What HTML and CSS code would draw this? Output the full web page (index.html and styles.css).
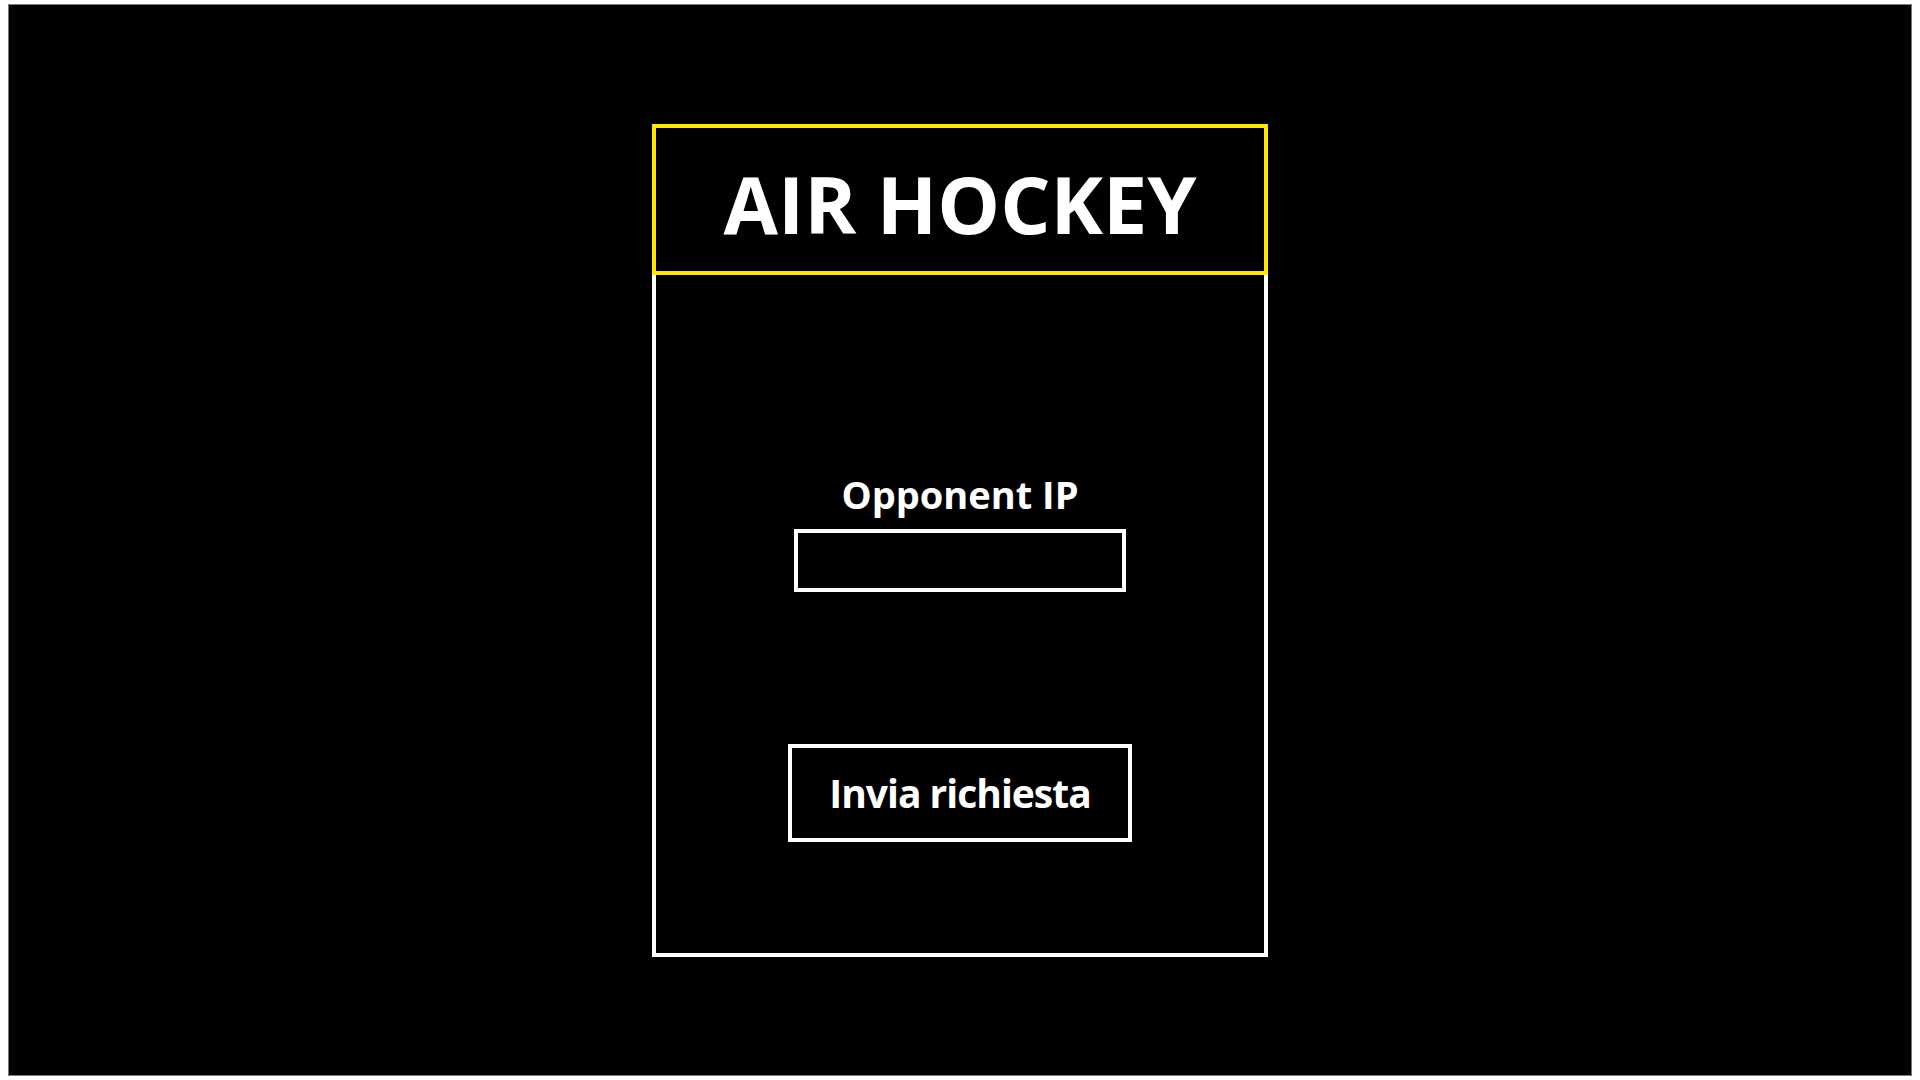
FILE: index.html
```html
<!DOCTYPE html>
<html lang="it">
<head>
<meta charset="utf-8">
<title>Air Hockey</title>
<link rel="stylesheet" href="styles.css">
</head>
<body>
<div class="screen">
  <div class="card">
    <header class="card-header">
      <h1 class="title">AIR HOCKEY</h1>
    </header>
    <main class="card-body">
      <label class="label" for="ip">Opponent IP</label>
      <input class="ip-input" id="ip" type="text">
      <button class="send-btn" type="button">Invia richiesta</button>
    </main>
  </div>
</div>
</body>
</html>
```
FILE: styles.css
```css
html, body {
  margin: 0;
  padding: 0;
  background: #ffffff;
}
body {
  padding: 4px 8px;
  font-family: "Open Sans", "Noto Sans", sans-serif;
}
.screen {
  box-sizing: border-box;
  height: 1072px;
  background: #000000;
  border: 1px solid #7a7a7a;
  display: flex;
  justify-content: center;
  padding-top: 119px;
}
.card {
  width: 616px;
  display: flex;
  flex-direction: column;
}
.card-header {
  box-sizing: border-box;
  height: 151px;
  border: 4px solid #ffe500;
  display: flex;
  justify-content: center;
}
.title {
  margin: 0;
  color: #ffffff;
  font-weight: 700;
  font-size: 79px;
  line-height: 100px;
  padding-top: 26px;
  letter-spacing: 0;
}
.card-body {
  box-sizing: border-box;
  height: 682px;
  border: 4px solid #ffffff;
  border-top: none;
  display: flex;
  flex-direction: column;
  align-items: center;
  padding-top: 199px;
}
.label {
  color: #ffffff;
  font-weight: 700;
  font-size: 38px;
  line-height: 40px;
  height: 40px;
}
.ip-input {
  box-sizing: border-box;
  margin: 15px 0 0;
  width: 332px;
  height: 63px;
  border: 4px solid #ffffff;
  background: #000000;
  color: #ffffff;
  outline: none;
  padding: 0 10px;
  font-family: inherit;
  font-size: 28px;
}
.send-btn {
  box-sizing: border-box;
  margin-top: 152px;
  width: 344px;
  height: 98px;
  border: 4px solid #ffffff;
  background: #000000;
  color: #ffffff;
  font-family: inherit;
  font-weight: 700;
  font-size: 39px;
  letter-spacing: -1px;
  line-height: 48px;
  padding: 0;
}
```
